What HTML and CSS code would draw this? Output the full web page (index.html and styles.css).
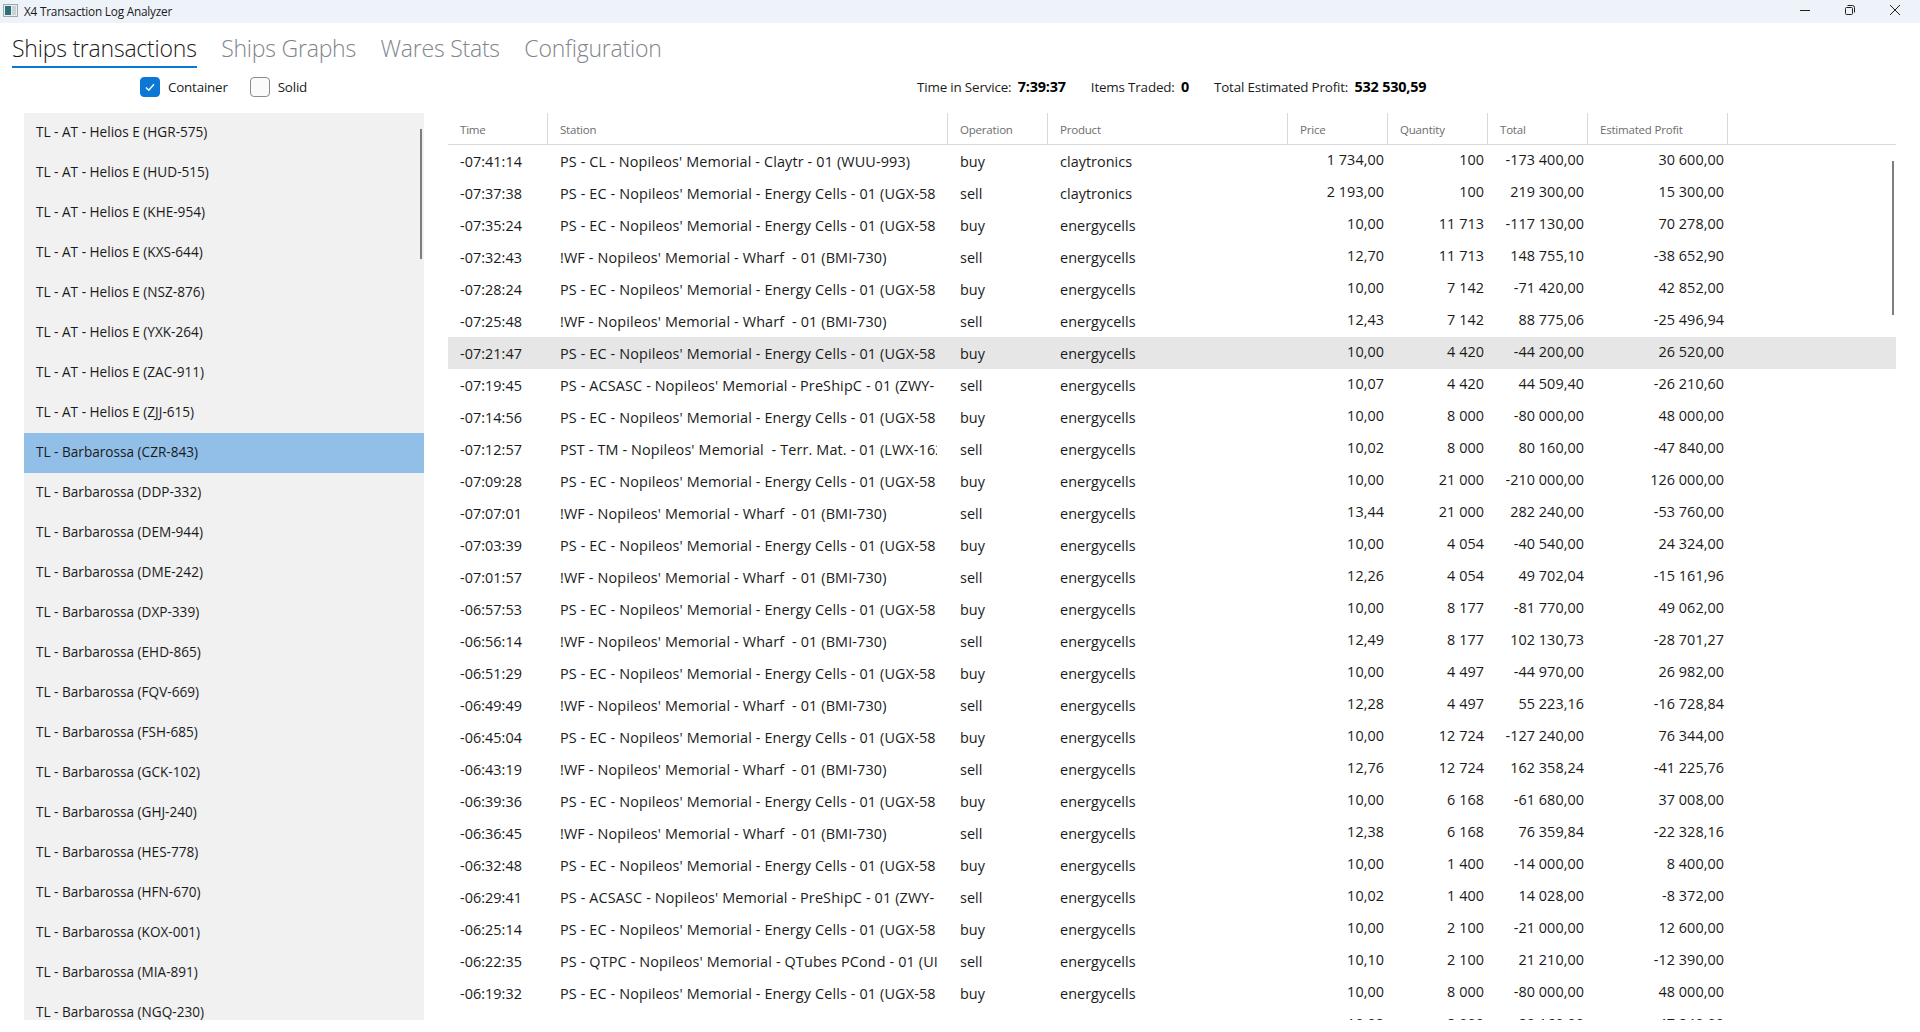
FILE: index.html
```html
<!DOCTYPE html>
<html lang="en">
<head>
<meta charset="utf-8">
<title>X4 Transaction Log Analyzer</title>
<link rel="stylesheet" href="styles.css">
</head>
<body>
<header class="titlebar">
  <svg class="app-icon" width="16" height="16" viewBox="0 0 16 16"><rect x="0.5" y="1.5" width="14" height="12" fill="#e8eef0" stroke="#a0a8ac"/><rect x="2" y="3" width="6" height="9" fill="#2f6f78"/><rect x="9" y="3" width="4" height="9" fill="#c9d3d6"/></svg>
  <span class="app-title">X4 Transaction Log Analyzer</span>
  <div class="win-controls">
    <svg width="12" height="12" viewBox="0 0 12 12"><path d="M1 6.5h10" stroke="#222" fill="none"/></svg>
    <svg width="12" height="12" viewBox="0 0 12 12"><path d="M1.5 4.5a1 1 0 0 1 1-1h5a1 1 0 0 1 1 1v5a1 1 0 0 1-1 1h-5a1 1 0 0 1-1-1zM3.5 1.5h5a2 2 0 0 1 2 2v5" stroke="#222" fill="none"/></svg>
    <svg width="12" height="12" viewBox="0 0 12 12"><path d="M1 1l10 10M11 1L1 11" stroke="#222" fill="none"/></svg>
  </div>
</header>
<nav class="tabs">
  <span class="tab active">Ships transactions</span>
  <span class="tab">Ships Graphs</span>
  <span class="tab">Wares Stats</span>
  <span class="tab">Configuration</span>
</nav>
<section class="toolbar">
  <div class="filters">
    <label class="check"><span class="box on"><svg width="12" height="12" viewBox="0 0 12 12"><path d="M2 6.5l2.8 2.8L10 3.2" stroke="#fff" stroke-width="1.4" fill="none"/></svg></span>Container</label>
    <label class="check"><span class="box"></span>Solid</label>
  </div>
  <div class="stats">
    <span>Time in Service: <b>7:39:37</b></span>
    <span>Items Traded: <b>0</b></span>
    <span>Total Estimated Profit: <b>532 530,59</b></span>
  </div>
</section>
<main class="content">
  <aside class="ship-list">
    <div class="thumb list-thumb"></div>
    <div class="ship">TL - AT - Helios E (HGR-575)</div>
    <div class="ship">TL - AT - Helios E (HUD-515)</div>
    <div class="ship">TL - AT - Helios E (KHE-954)</div>
    <div class="ship">TL - AT - Helios E (KXS-644)</div>
    <div class="ship">TL - AT - Helios E (NSZ-876)</div>
    <div class="ship">TL - AT - Helios E (YXK-264)</div>
    <div class="ship">TL - AT - Helios E (ZAC-911)</div>
    <div class="ship">TL - AT - Helios E (ZJJ-615)</div>
    <div class="ship selected">TL - Barbarossa (CZR-843)</div>
    <div class="ship">TL - Barbarossa (DDP-332)</div>
    <div class="ship">TL - Barbarossa (DEM-944)</div>
    <div class="ship">TL - Barbarossa (DME-242)</div>
    <div class="ship">TL - Barbarossa (DXP-339)</div>
    <div class="ship">TL - Barbarossa (EHD-865)</div>
    <div class="ship">TL - Barbarossa (FQV-669)</div>
    <div class="ship">TL - Barbarossa (FSH-685)</div>
    <div class="ship">TL - Barbarossa (GCK-102)</div>
    <div class="ship">TL - Barbarossa (GHJ-240)</div>
    <div class="ship">TL - Barbarossa (HES-778)</div>
    <div class="ship">TL - Barbarossa (HFN-670)</div>
    <div class="ship">TL - Barbarossa (KOX-001)</div>
    <div class="ship">TL - Barbarossa (MIA-891)</div>
    <div class="ship">TL - Barbarossa (NGQ-230)</div>
  </aside>
  <section class="grid">
    <div class="thumb grid-thumb"></div>
    <div class="row head"><div>Time</div><div>Station</div><div>Operation</div><div>Product</div><div>Price</div><div>Quantity</div><div>Total</div><div>Estimated Profit</div></div>
    <div class="row"><div>-07:41:14</div><div>PS - CL - Nopileos' Memorial - Claytr - 01 (WUU-993)</div><div>buy</div><div>claytronics</div><div class="n">1 734,00</div><div class="n">100</div><div class="n">-173 400,00</div><div class="n">30 600,00</div></div>
    <div class="row"><div>-07:37:38</div><div>PS - EC - Nopileos' Memorial - Energy Cells - 01 (UGX-58</div><div>sell</div><div>claytronics</div><div class="n">2 193,00</div><div class="n">100</div><div class="n">219 300,00</div><div class="n">15 300,00</div></div>
    <div class="row"><div>-07:35:24</div><div>PS - EC - Nopileos' Memorial - Energy Cells - 01 (UGX-58</div><div>buy</div><div>energycells</div><div class="n">10,00</div><div class="n">11 713</div><div class="n">-117 130,00</div><div class="n">70 278,00</div></div>
    <div class="row"><div>-07:32:43</div><div>!WF - Nopileos' Memorial - Wharf&nbsp; - 01 (BMI-730)</div><div>sell</div><div>energycells</div><div class="n">12,70</div><div class="n">11 713</div><div class="n">148 755,10</div><div class="n">-38 652,90</div></div>
    <div class="row"><div>-07:28:24</div><div>PS - EC - Nopileos' Memorial - Energy Cells - 01 (UGX-58</div><div>buy</div><div>energycells</div><div class="n">10,00</div><div class="n">7 142</div><div class="n">-71 420,00</div><div class="n">42 852,00</div></div>
    <div class="row"><div>-07:25:48</div><div>!WF - Nopileos' Memorial - Wharf&nbsp; - 01 (BMI-730)</div><div>sell</div><div>energycells</div><div class="n">12,43</div><div class="n">7 142</div><div class="n">88 775,06</div><div class="n">-25 496,94</div></div>
    <div class="row hl"><div>-07:21:47</div><div>PS - EC - Nopileos' Memorial - Energy Cells - 01 (UGX-58</div><div>buy</div><div>energycells</div><div class="n">10,00</div><div class="n">4 420</div><div class="n">-44 200,00</div><div class="n">26 520,00</div></div>
    <div class="row"><div>-07:19:45</div><div>PS - ACSASC - Nopileos' Memorial - PreShipC - 01 (ZWY-</div><div>sell</div><div>energycells</div><div class="n">10,07</div><div class="n">4 420</div><div class="n">44 509,40</div><div class="n">-26 210,60</div></div>
    <div class="row"><div>-07:14:56</div><div>PS - EC - Nopileos' Memorial - Energy Cells - 01 (UGX-58</div><div>buy</div><div>energycells</div><div class="n">10,00</div><div class="n">8 000</div><div class="n">-80 000,00</div><div class="n">48 000,00</div></div>
    <div class="row"><div>-07:12:57</div><div>PST - TM - Nopileos' Memorial&nbsp; - Terr. Mat. - 01 (LWX-162</div><div>sell</div><div>energycells</div><div class="n">10,02</div><div class="n">8 000</div><div class="n">80 160,00</div><div class="n">-47 840,00</div></div>
    <div class="row"><div>-07:09:28</div><div>PS - EC - Nopileos' Memorial - Energy Cells - 01 (UGX-58</div><div>buy</div><div>energycells</div><div class="n">10,00</div><div class="n">21 000</div><div class="n">-210 000,00</div><div class="n">126 000,00</div></div>
    <div class="row"><div>-07:07:01</div><div>!WF - Nopileos' Memorial - Wharf&nbsp; - 01 (BMI-730)</div><div>sell</div><div>energycells</div><div class="n">13,44</div><div class="n">21 000</div><div class="n">282 240,00</div><div class="n">-53 760,00</div></div>
    <div class="row"><div>-07:03:39</div><div>PS - EC - Nopileos' Memorial - Energy Cells - 01 (UGX-58</div><div>buy</div><div>energycells</div><div class="n">10,00</div><div class="n">4 054</div><div class="n">-40 540,00</div><div class="n">24 324,00</div></div>
    <div class="row"><div>-07:01:57</div><div>!WF - Nopileos' Memorial - Wharf&nbsp; - 01 (BMI-730)</div><div>sell</div><div>energycells</div><div class="n">12,26</div><div class="n">4 054</div><div class="n">49 702,04</div><div class="n">-15 161,96</div></div>
    <div class="row"><div>-06:57:53</div><div>PS - EC - Nopileos' Memorial - Energy Cells - 01 (UGX-58</div><div>buy</div><div>energycells</div><div class="n">10,00</div><div class="n">8 177</div><div class="n">-81 770,00</div><div class="n">49 062,00</div></div>
    <div class="row"><div>-06:56:14</div><div>!WF - Nopileos' Memorial - Wharf&nbsp; - 01 (BMI-730)</div><div>sell</div><div>energycells</div><div class="n">12,49</div><div class="n">8 177</div><div class="n">102 130,73</div><div class="n">-28 701,27</div></div>
    <div class="row"><div>-06:51:29</div><div>PS - EC - Nopileos' Memorial - Energy Cells - 01 (UGX-58</div><div>buy</div><div>energycells</div><div class="n">10,00</div><div class="n">4 497</div><div class="n">-44 970,00</div><div class="n">26 982,00</div></div>
    <div class="row"><div>-06:49:49</div><div>!WF - Nopileos' Memorial - Wharf&nbsp; - 01 (BMI-730)</div><div>sell</div><div>energycells</div><div class="n">12,28</div><div class="n">4 497</div><div class="n">55 223,16</div><div class="n">-16 728,84</div></div>
    <div class="row"><div>-06:45:04</div><div>PS - EC - Nopileos' Memorial - Energy Cells - 01 (UGX-58</div><div>buy</div><div>energycells</div><div class="n">10,00</div><div class="n">12 724</div><div class="n">-127 240,00</div><div class="n">76 344,00</div></div>
    <div class="row"><div>-06:43:19</div><div>!WF - Nopileos' Memorial - Wharf&nbsp; - 01 (BMI-730)</div><div>sell</div><div>energycells</div><div class="n">12,76</div><div class="n">12 724</div><div class="n">162 358,24</div><div class="n">-41 225,76</div></div>
    <div class="row"><div>-06:39:36</div><div>PS - EC - Nopileos' Memorial - Energy Cells - 01 (UGX-58</div><div>buy</div><div>energycells</div><div class="n">10,00</div><div class="n">6 168</div><div class="n">-61 680,00</div><div class="n">37 008,00</div></div>
    <div class="row"><div>-06:36:45</div><div>!WF - Nopileos' Memorial - Wharf&nbsp; - 01 (BMI-730)</div><div>sell</div><div>energycells</div><div class="n">12,38</div><div class="n">6 168</div><div class="n">76 359,84</div><div class="n">-22 328,16</div></div>
    <div class="row"><div>-06:32:48</div><div>PS - EC - Nopileos' Memorial - Energy Cells - 01 (UGX-58</div><div>buy</div><div>energycells</div><div class="n">10,00</div><div class="n">1 400</div><div class="n">-14 000,00</div><div class="n">8 400,00</div></div>
    <div class="row"><div>-06:29:41</div><div>PS - ACSASC - Nopileos' Memorial - PreShipC - 01 (ZWY-</div><div>sell</div><div>energycells</div><div class="n">10,02</div><div class="n">1 400</div><div class="n">14 028,00</div><div class="n">-8 372,00</div></div>
    <div class="row"><div>-06:25:14</div><div>PS - EC - Nopileos' Memorial - Energy Cells - 01 (UGX-58</div><div>buy</div><div>energycells</div><div class="n">10,00</div><div class="n">2 100</div><div class="n">-21 000,00</div><div class="n">12 600,00</div></div>
    <div class="row"><div>-06:22:35</div><div>PS - QTPC - Nopileos' Memorial - QTubes PCond - 01 (UI</div><div>sell</div><div>energycells</div><div class="n">10,10</div><div class="n">2 100</div><div class="n">21 210,00</div><div class="n">-12 390,00</div></div>
    <div class="row"><div>-06:19:32</div><div>PS - EC - Nopileos' Memorial - Energy Cells - 01 (UGX-58</div><div>buy</div><div>energycells</div><div class="n">10,00</div><div class="n">8 000</div><div class="n">-80 000,00</div><div class="n">48 000,00</div></div>
    <div class="row"><div></div><div></div><div></div><div></div><div class="n">10,02</div><div class="n">8 000</div><div class="n">80 160,00</div><div class="n">-47 840,00</div></div>
  </section>
</main>
</body>
</html>
```
FILE: styles.css
```css
* { box-sizing: border-box; }
html, body { margin: 0; height: 100%; overflow: hidden; background: #fff; }
body { font-family: "Open Sans", "Noto Sans", sans-serif; font-size: 13.4px; color: #1a1a1a; letter-spacing: -0.2px; }

.titlebar { height: 23px; background: #eef3f9; display: flex; align-items: center; padding: 0 0 1px 3px; font-size: 11.8px; letter-spacing: -0.22px; }
.app-icon { flex: none; }
.app-title { margin-left: 5px; }
.win-controls { margin-left: auto; display: flex; gap: 33px; padding: 0 19px 3px 0; align-items: center; }

.tabs { height: 46px; display: flex; gap: 24.5px; padding-left: 12px; align-items: flex-start; }
.tab { font-size: 23px; font-weight: 300; color: #80868c; height: 45px; line-height: 38px; padding-top: 6px; letter-spacing: -0.22px; }
.tab.active { color: #1b1b1b; border-bottom: 2px solid #0a78d4; }

.toolbar { height: 44px; display: flex; align-items: flex-start; padding: 8px 0 0 140px; }
.filters { display: flex; gap: 22px; width: 777px; }
.check { display: flex; align-items: center; gap: 8px; height: 20px; }
.box { width: 20px; height: 20px; border: 1px solid #8b8b8b; border-radius: 4px; display: flex; align-items: center; justify-content: center; background: #fafafa; }
.box.on { background: #0a78d4; border-color: #0a78d4; }
.stats { display: flex; gap: 25px; height: 18px; align-items: center; letter-spacing: -0.17px; }
.stats b { margin-left: 3px; font-weight: 700; color: #000; font-size: 14.4px; }

.content { display: flex; height: 907px; padding-left: 24px; overflow: hidden; }
.ship-list { position: relative; flex: none; width: 400px; height: 907px; background: #f1f1f1; overflow: hidden; font-size: 13.6px; letter-spacing: 0; }
.ship { height: 40px; line-height: 38px; padding-left: 12px; }
.ship.selected { background: #92bfe8; }
.thumb { position: absolute; width: 2px; background: #7d7d7d; }
.list-thumb { right: 2px; top: 16px; height: 130px; }

.grid { position: relative; flex: none; width: 1448px; margin-left: 24px; height: 907px; overflow: hidden; font-size: 14.4px; letter-spacing: 0.05px; }
.grid-thumb { right: 2px; top: 48px; height: 154px; }
.row { display: grid; grid-template-columns: 100px 400px 100px 240px 100px 100px 100px 140px; width: 1448px; height: 32px; line-height: 33px; }
.row > div { padding-left: 12px; white-space: nowrap; overflow: hidden; }
.row > div.n { padding: 0 4px 0 0; text-align: right; line-height: 29px; }
.row > div:nth-child(2) { margin-right: 11px; letter-spacing: 0.14px; }
.row.hl { background: #e6e6e6; }
.row.head { height: 32px; border-bottom: 1px solid #d9d9d9; color: #6d6d6d; font-size: 11.5px; letter-spacing: -0.2px; width: 1448px; }
.row.head > div { border-right: 1px solid #d9d9d9; line-height: 33px; margin: 0; letter-spacing: -0.2px; }
```
